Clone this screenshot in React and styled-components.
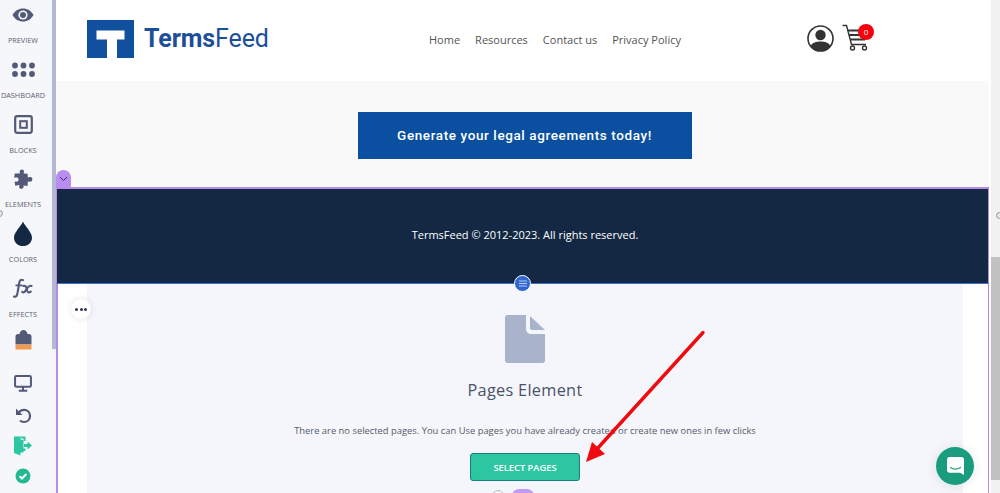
import React from "react";
import styled, { createGlobalStyle } from "styled-components";

const GlobalStyle = createGlobalStyle`
  html, body {
    margin: 0;
    padding: 0;
    height: 100%;
    overflow: hidden;
    background: #fff;
    font-family: "Open Sans", "Liberation Sans", sans-serif;
  }
  * { box-sizing: border-box; }
`;

const Shell = styled.div`
  position: relative;
  width: 1000px;
  height: 493px;
  display: grid;
  grid-template-columns: 52px 4px 1fr 9px;
  overflow: hidden;
`;

const Sidebar = styled.aside`
  background: #f6f7fb;
  display: flex;
  flex-direction: column;
  align-items: center;
  padding-right: 6px;
`;

const SideItem = styled.div`
  height: 54.8px;
  width: 100%;
  display: flex;
  flex-direction: column;
  align-items: center;
`;

const SideIcon = styled.div`
  height: 30px;
  display: flex;
  align-items: center;
  justify-content: center;
`;

const SideLabel = styled.span`
  margin-top: 5px;
  font-size: 7.3px;
  line-height: 10px;
  color: #5a606e;
  white-space: nowrap;
`;

const ToolIcon = styled.div`
  height: ${(p) => p.$h}px;
  margin-top: ${(p) => p.$gap || 0}px;
  display: flex;
  align-items: center;
  justify-content: center;
`;

const SideTrack = styled.div`
  background: #f4f5f9;
`;

const SideThumb = styled.div`
  height: 349px;
  background: #b3b9d2;
`;

const Main = styled.main`
  display: flex;
  flex-direction: column;
  min-width: 0;
  padding-right: 2px;
  background: #fff;
`;

const Header = styled.header`
  height: 81px;
  background: #fff;
  display: grid;
  grid-template-columns: 31px 182px 1fr auto;
  align-items: center;
`;

const Logo = styled.div`
  grid-column: 2;
  display: flex;
  align-items: center;
  gap: 10px;
  margin-top: -4px;
  svg { flex-shrink: 0; }
`;

const LogoText = styled.span`
  font-family: Roboto, "Liberation Sans", sans-serif;
  font-size: 25px;
  letter-spacing: -0.1px;
  color: #1d4f99;
  font-weight: 400;
  white-space: nowrap;
  b { font-weight: 700; }
`;

const Nav = styled.nav`
  display: flex;
  gap: 15px;
  margin-left: 160px;
  margin-top: -2px;
  font-size: 11px;
  color: #555;
`;

const Account = styled.div`
  display: flex;
  align-items: center;
  gap: 8px;
  padding-right: 120px;
  margin-top: -5px;
`;

const CartWrap = styled.div`
  position: relative;
  width: 27px;
  height: 28px;
`;

const Badge = styled.span`
  position: absolute;
  top: 0;
  right: -5px;
  width: 16px;
  height: 16px;
  border-radius: 50%;
  background: #f5000f;
  color: #fff;
  font-size: 8px;
  line-height: 16px;
  text-align: center;
`;

const Band = styled.section`
  height: 106px;
  background: #f9f9fa;
  display: flex;
  justify-content: center;
  padding-top: 31px;
`;

const Cta = styled.div`
  width: 334px;
  height: 47px;
  margin-left: 4px;
  background: #0a4fa0;
  color: #fff;
  font-family: Roboto, "Liberation Sans", sans-serif;
  font-size: 13.5px;
  font-weight: 500;
  letter-spacing: 0.6px;
  display: flex;
  align-items: center;
  justify-content: center;
  padding-bottom: 2px;
`;

const Footer = styled.footer`
  height: 97px;
  background: #142844;
  border-top: 2px solid #b58ce6;
  border-bottom: 1px solid #3d6fc4;
  border-left: 1px solid #b58ce6;
  border-right: 1px solid #b58ce6;
  color: #fff;
  font-size: 11px;
  display: flex;
  align-items: center;
  justify-content: center;
  padding-left: 5px;
  padding-bottom: 3px;
`;

const PagesFrame = styled.section`
  flex: 1;
  display: flex;
  background: #fff;
  border-left: 2px solid #b58ce6;
  border-right: 1px solid #b58ce6;
  padding: 0 25px 0 29px;
  min-height: 0;
`;

const PagesEmpty = styled.div`
  flex: 1;
  background: #f5f6fb;
  display: flex;
  flex-direction: column;
  align-items: center;
  padding-top: 31px;
`;

const PagesTitle = styled.h2`
  margin: 15px 0 0;
  font-size: 16.3px;
  line-height: 24px;
  font-weight: 400;
  color: #4a5268;
  letter-spacing: 0.3px;
`;

const PagesText = styled.p`
  margin: 22px 0 0;
  font-size: 9.4px;
  line-height: 14px;
  color: #555b6c;
`;

const SelectButton = styled.div`
  margin-top: 15px;
  width: 110px;
  height: 28px;
  background: #2dc6a2;
  border: 1px solid #1e7d7c;
  border-radius: 3px;
  color: #fff;
  font-size: 9.3px;
  font-weight: 600;
  display: flex;
  align-items: center;
  justify-content: center;
`;

const PageTrack = styled.div`
  background: #f1f1f1;
  display: flex;
  flex-direction: column;
  padding-top: 257px;
`;

const PageThumb = styled.div`
  height: 223px;
  background: #c1c1c1;
`;

const Collapse = styled.div`
  position: absolute;
  left: 56px;
  top: 170px;
  width: 15px;
  height: 17px;
  background: #b98ef0;
  border-radius: 8px 8px 0 0;
  display: flex;
  align-items: center;
  justify-content: center;
`;

const Handle = styled.div`
  position: absolute;
  left: 514px;
  top: 275px;
  width: 17px;
  height: 17px;
  border-radius: 50%;
  border: 1.5px solid #fff;
  background: #2f66d0;
  display: flex;
  align-items: center;
  justify-content: center;
`;

const MoreButton = styled.div`
  position: absolute;
  left: 71px;
  top: 299px;
  width: 20px;
  height: 20px;
  border-radius: 50%;
  background: #fff;
  box-shadow: 0 0 6px rgba(60, 70, 100, 0.15);
  display: flex;
  align-items: center;
  justify-content: center;
  gap: 1.5px;
`;

const Dot = styled.i`
  width: 3px;
  height: 3px;
  border-radius: 50%;
  background: #2d3550;
`;

const BottomRing = styled.div`
  position: absolute;
  left: 492px;
  top: 490px;
  width: 12px;
  height: 12px;
  border-radius: 50%;
  background: #f5f6fb;
  border: 1px solid #b9bccb;
`;

const BottomTab = styled.div`
  position: absolute;
  left: 512px;
  top: 489px;
  width: 22px;
  height: 12px;
  border-radius: 7px 7px 0 0;
  background: #c29af2;
`;

const EdgeDot = styled.div`
  position: absolute;
  left: ${(p) => p.$x}px;
  top: ${(p) => p.$y}px;
  width: 7px;
  height: 7px;
  border-radius: 50%;
  background: #e6e6e8;
  border: 1px solid #9a9a9a;
`;

const ChatButton = styled.div`
  position: absolute;
  left: 936px;
  top: 447px;
  width: 38px;
  height: 38px;
  border-radius: 50%;
  background: #1a9c7e;
  box-shadow: 0 1px 12px rgba(0, 0, 0, 0.1);
  display: flex;
  align-items: center;
  justify-content: center;
`;

const ArrowOverlay = styled.svg`
  position: absolute;
  left: 570px;
  top: 320px;
  pointer-events: none;
`;

const sideColor = "#525a78";

const PreviewIcon = () => (
  <svg width="22" height="14" viewBox="0 0 22 14">
    <path d="M0.5 7C3 2.6 6.6 0.5 11 0.5S19 2.6 21.5 7C19 11.4 15.4 13.5 11 13.5S3 11.4 0.5 7Z" fill={sideColor} />
    <circle cx="11" cy="7" r="4.6" fill="#f6f7fb" />
    <circle cx="11" cy="7" r="3" fill={sideColor} />
  </svg>
);

const DashboardIcon = () => (
  <svg width="23" height="15" viewBox="0 0 23 15" fill={sideColor}>
    {[3, 11.5, 20].map((x) =>
      [3.5, 12].map((y) => <circle key={`${x}-${y}`} cx={x} cy={y} r="2.9" />)
    )}
  </svg>
);

const BlocksIcon = () => (
  <svg width="19" height="19" viewBox="0 0 19 19" fill="none" stroke={sideColor}>
    <rect x="1.2" y="1.2" width="16.6" height="16.6" rx="2" strokeWidth="2.2" />
    <rect x="6.2" y="6.2" width="6.6" height="6.6" strokeWidth="2" />
  </svg>
);

const PuzzleIcon = () => (
  <svg width="20" height="20" viewBox="0 0 20 20">
    <path
      d="M7 1.5C8.2 0 10.6 0.3 11 2.2C11.2 3.4 10.4 3.8 10.8 4.6L14.6 4.8L14.8 8.2C15.6 8.8 16.4 7.6 17.8 8C19.9 8.7 19.9 12 17.8 12.6C16.4 13 15.6 12 14.8 12.6L14.6 17L10.6 16.4C10 17 11 17.6 10.4 18.8C9.4 20.4 6.6 20 6.2 18.2C6 17.2 6.8 16.6 6.2 16L2.2 16.8L1.6 12.6C2.4 12 3 13 4.2 12.6C6 12 6 9.2 4.2 8.6C3 8.2 2.4 9 1.2 8.4L1.8 4.6L6.6 4.6C7.2 3.6 6.2 2.8 7 1.5Z"
      fill={sideColor}
    />
  </svg>
);

const DropIcon = () => (
  <svg width="18" height="26" viewBox="0 0 18 25">
    <path d="M9 0C11 5 18 10.500 18 16.200C18 21 14 24.500 9 24.500S0 21 0 16.200C0 10.500 7 5 9 0Z" fill="#142844" />
  </svg>
);

const FxIcon = () => (
  <svg width="20" height="21" viewBox="0 0 20 20" fill="none" stroke={sideColor} strokeWidth="2.1" strokeLinecap="round">
    <path d="M10 1.600C8 0.600 6.800 1.600 6.300 4L4.400 15C4 17.400 2.800 18.800 1 18" />
    <path d="M3.200 6.800H9" strokeWidth="1.700" />
    <path d="M10.400 7.400C12.200 6.800 13 7.600 13.600 10L14.400 12.800C14.800 14.200 16 14.600 17.800 13.200" />
    <path d="M18.600 7.400C17 6.800 15.600 7.600 14.200 9.600L12.400 12.400C11.400 14 10.200 14.200 9.200 13.400" />
  </svg>
);

const CaseIcon = () => (
  <svg width="17" height="20" viewBox="0 0 17 20">
    <path d="M0.500 6.500C0.500 5 1.500 4 3 4H4.500C5 1.500 6.500 0 8.500 0S12 1.500 12.500 4H14C15.500 4 16.500 5 16.500 6.500V14.500H0.500Z" fill={sideColor} />
    <rect x="0.500" y="14.500" width="16" height="5" fill="#f09a50" />
  </svg>
);

const MonitorIcon = () => (
  <svg width="18" height="17" viewBox="0 0 17 16" fill="none" stroke={sideColor}>
    <rect x="1" y="1" width="15" height="10" rx="1.2" strokeWidth="1.900" />
    <path d="M8.500 11V14.500M4.500 14.800H12.500" strokeWidth="1.900" />
  </svg>
);

const UndoIcon = () => (
  <svg width="17" height="17" viewBox="0 0 17 17" fill="none">
    <path d="M4 5.500C5.200 3.600 7 2.800 9 2.800C12.400 2.800 15 5.400 15 8.900C15 12.400 12.400 15 9 15C7.400 15 6 14.500 5 13.500" stroke={sideColor} strokeWidth="2.200" />
    <path d="M1 1.500V8H7.500Z" fill={sideColor} />
  </svg>
);

const DoorIcon = () => (
  <svg width="18" height="20" viewBox="0 0 18 20">
    <path d="M0 0.500H11.500V5H9.500V2.500H5L9.500 4.500V15H11.500V12.500H9.500V16.500H6.500V19.500L0 17Z" fill="#2dc6a2" />
    <path d="M10 8H13.500V5.500L18 9.500L13.500 13.500V11H10Z" fill="#2dc6a2" />
  </svg>
);

const CheckIcon = () => (
  <svg width="16" height="16" viewBox="0 0 16 16">
    <circle cx="8" cy="8" r="7.500" fill="#22b893" />
    <path d="M4.600 8.200L7 10.500L11.400 6" fill="none" stroke="#fff" strokeWidth="2" />
  </svg>
);

const LogoMark = () => (
  <svg width="47" height="38" viewBox="0 0 47 38">
    <rect width="47" height="38" fill="#11509f" />
    <path d="M9.500 10.500H37.500V19.500H30V38H20V19.500H9.500Z" fill="#fff" />
  </svg>
);

const UserIcon = () => (
  <svg width="27" height="27" viewBox="0 0 27 27">
    <circle cx="13.500" cy="13.500" r="12.500" fill="#fff" stroke="#333" strokeWidth="1.600" />
    <circle cx="13.500" cy="10" r="5.200" fill="#333" />
    <path d="M3.500 21C5.500 17.500 9 16.500 13.500 16.500S21.500 17.500 23.500 21C21 24.500 17.500 26 13.500 26S6 24.500 3.500 21Z" fill="#333" />
  </svg>
);

const CartIcon = () => (
  <svg width="27" height="27" viewBox="0 0 27 27" fill="none" stroke="#333">
    <path d="M0.500 1.500H4.500L9.500 20.500H24" strokeWidth="1.400" />
    <path d="M6 6.500H25M7 11H24M8.500 15.500H23" strokeWidth="1.800" />
    <circle cx="10.500" cy="24" r="2" strokeWidth="1.400" />
    <circle cx="22.500" cy="24" r="2" strokeWidth="1.400" />
  </svg>
);

const DocIcon = () => (
  <svg width="40" height="48" viewBox="0 0 40 48">
    <path d="M2.500 0H21V14C21 16.800 23.200 19 26 19H40V45.500C40 46.900 38.900 48 37.500 48H2.500C1.100 48 0 46.900 0 45.500V2.500C0 1.100 1.100 0 2.500 0Z" fill="#aab3cc" />
    <path d="M25 1L40 15H27C25.900 15 25 14.100 25 13Z" fill="#aab3cc" />
  </svg>
);

const ChatIcon = () => (
  <svg width="17" height="18" viewBox="0 0 17 18">
    <path d="M2.500 0H14.500C15.900 0 17 1.100 17 2.500V18L13 15.800H2.500C1.100 15.800 0 14.700 0 13.300V2.500C0 1.100 1.100 0 2.500 0Z" fill="#fff" />
    <path d="M3.500 10.500C6.500 12.500 10.500 12.500 13.500 10.500" fill="none" stroke="#1a9c7e" strokeWidth="1.200" strokeLinecap="round" />
  </svg>
);

const sideItems = [
  { label: "PREVIEW", icon: <PreviewIcon /> },
  { label: "DASHBOARD", icon: <DashboardIcon /> },
  { label: "BLOCKS", icon: <BlocksIcon /> },
  { label: "ELEMENTS", icon: <PuzzleIcon /> },
  { label: "COLORS", icon: <DropIcon /> },
  { label: "EFFECTS", icon: <FxIcon /> },
];

export default function App() {
  return (
    <Shell>
      <GlobalStyle />
      <Sidebar>
        {sideItems.map((item) => (
          <SideItem key={item.label}>
            <SideIcon>{item.icon}</SideIcon>
            <SideLabel>{item.label}</SideLabel>
          </SideItem>
        ))}
        <ToolIcon $h={22}><CaseIcon /></ToolIcon>
        <ToolIcon $h={34} $gap={16}><MonitorIcon /></ToolIcon>
        <ToolIcon $h={30}><UndoIcon /></ToolIcon>
        <ToolIcon $h={30}><DoorIcon /></ToolIcon>
        <ToolIcon $h={30}><CheckIcon /></ToolIcon>
      </Sidebar>
      <SideTrack>
        <SideThumb />
      </SideTrack>
      <Main>
        <Header>
          <Logo>
            <LogoMark />
            <LogoText><b>Terms</b>Feed</LogoText>
          </Logo>
          <Nav>
            <span>Home</span>
            <span>Resources</span>
            <span>Contact us</span>
            <span>Privacy Policy</span>
          </Nav>
          <Account>
            <UserIcon />
            <CartWrap>
              <CartIcon />
              <Badge>0</Badge>
            </CartWrap>
          </Account>
        </Header>
        <Band>
          <Cta>Generate your legal agreements today!</Cta>
        </Band>
        <Footer>TermsFeed © 2012-2023. All rights reserved.</Footer>
        <PagesFrame>
          <PagesEmpty>
            <DocIcon />
            <PagesTitle>Pages Element</PagesTitle>
            <PagesText>There are no selected pages. You can Use pages you have already created or create new ones in few clicks</PagesText>
            <SelectButton>SELECT PAGES</SelectButton>
          </PagesEmpty>
        </PagesFrame>
      </Main>
      <PageTrack>
        <PageThumb />
      </PageTrack>

      <Collapse>
        <svg width="9" height="6" viewBox="0 0 9 6" fill="none" stroke="#3b2a6b" strokeWidth="1">
          <path d="M1 1L4.500 4.500L8 1" />
        </svg>
      </Collapse>
      <Handle>
        <svg width="8" height="7" viewBox="0 0 8 7" stroke="#b9cdf5" strokeWidth="1">
          <path d="M0 1H8M0 3.500H8M0 6H8" />
        </svg>
      </Handle>
      <MoreButton>
        <Dot />
        <Dot />
        <Dot />
      </MoreButton>
      <BottomRing />
      <BottomTab />
      <EdgeDot $x={-4} $y={210} />
      <EdgeDot $x={996} $y={212} />
      <ChatButton>
        <ChatIcon />
      </ChatButton>
      <ArrowOverlay width="140" height="150" viewBox="0 0 140 150">
        <path d="M133 12.500L27 129" stroke="#f00a10" strokeWidth="3.400" strokeLinecap="round" fill="none" />
        <path d="M16 142L22 122L35 134Z" fill="#f00a10" />
      </ArrowOverlay>
    </Shell>
  );
}
